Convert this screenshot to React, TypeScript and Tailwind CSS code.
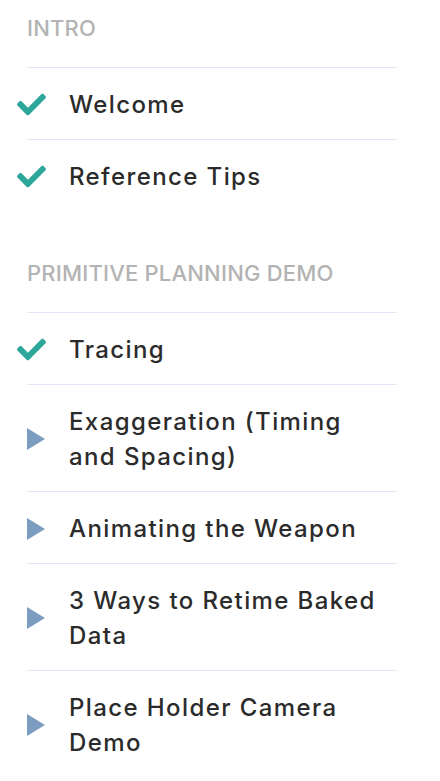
import React from "react";

type Item = { title: React.ReactNode; done: boolean };

const sections: { name: string; items: Item[] }[] = [
  {
    name: "INTRO",
    items: [
      { title: "Welcome", done: true },
      { title: "Reference Tips", done: true },
    ],
  },
  {
    name: "PRIMITIVE PLANNING DEMO",
    items: [
      { title: "Tracing", done: true },
      { title: "Exaggeration (Timing and Spacing)", done: false },
      { title: "Animating the Weapon", done: false },
      { title: "3 Ways to Retime Baked Data", done: false },
      { title: "Place Holder Camera Demo", done: false },
    ],
  },
];

function Check() {
  return (
    <svg width="29" height="29" viewBox="0 0 512 512" className="-ml-[10px] shrink-0">
      <path
        fill="#2ea79b"
        d="M173.898 439.404l-166.4-166.4c-9.997-9.997-9.997-26.206 0-36.204l36.203-36.204c9.997-9.998 26.207-9.998 36.204 0L192 312.69 432.095 72.596c9.997-9.997 26.207-9.997 36.204 0l36.203 36.204c9.997 9.997 9.997 26.206 0 36.204l-294.4 294.401c-9.998 9.997-26.207 9.997-36.204-.001z"
      />
    </svg>
  );
}

function Play() {
  return (
    <svg width="18" height="22" viewBox="0 0 18 22" className="shrink-0">
      <polygon points="0,0 18,11 0,22" fill="#7d9dc0" />
    </svg>
  );
}

export default function App() {
  return (
    <div
      className="w-[440px] min-h-[781px] bg-white pl-[27px] pr-[43px]"
      style={{ fontFamily: "Inter, 'Open Sans', sans-serif" }}
    >
      {sections.map((s, si) => (
        <div key={s.name} className={si > 0 ? "mt-[34px]" : ""}>
          <div className="h-[67px] pt-[13px] text-[22px] leading-[30px] font-medium text-[#b3b3b3] tracking-[0.2px]">
            {s.name}
          </div>
          {s.items.map((it, i) => (
            <div
              key={i}
              className="flex items-center border-t border-[#e3e7f5] pt-[19px] pb-[17px]"
            >
              <div className="w-[42px] flex items-center">
                {it.done ? <Check /> : <Play />}
              </div>
              <div className="w-[312px] text-[24px] leading-[35px] font-medium text-[#2b2b2b] tracking-[1.4px]">
                {it.title}
              </div>
            </div>
          ))}
        </div>
      ))}
    </div>
  );
}
